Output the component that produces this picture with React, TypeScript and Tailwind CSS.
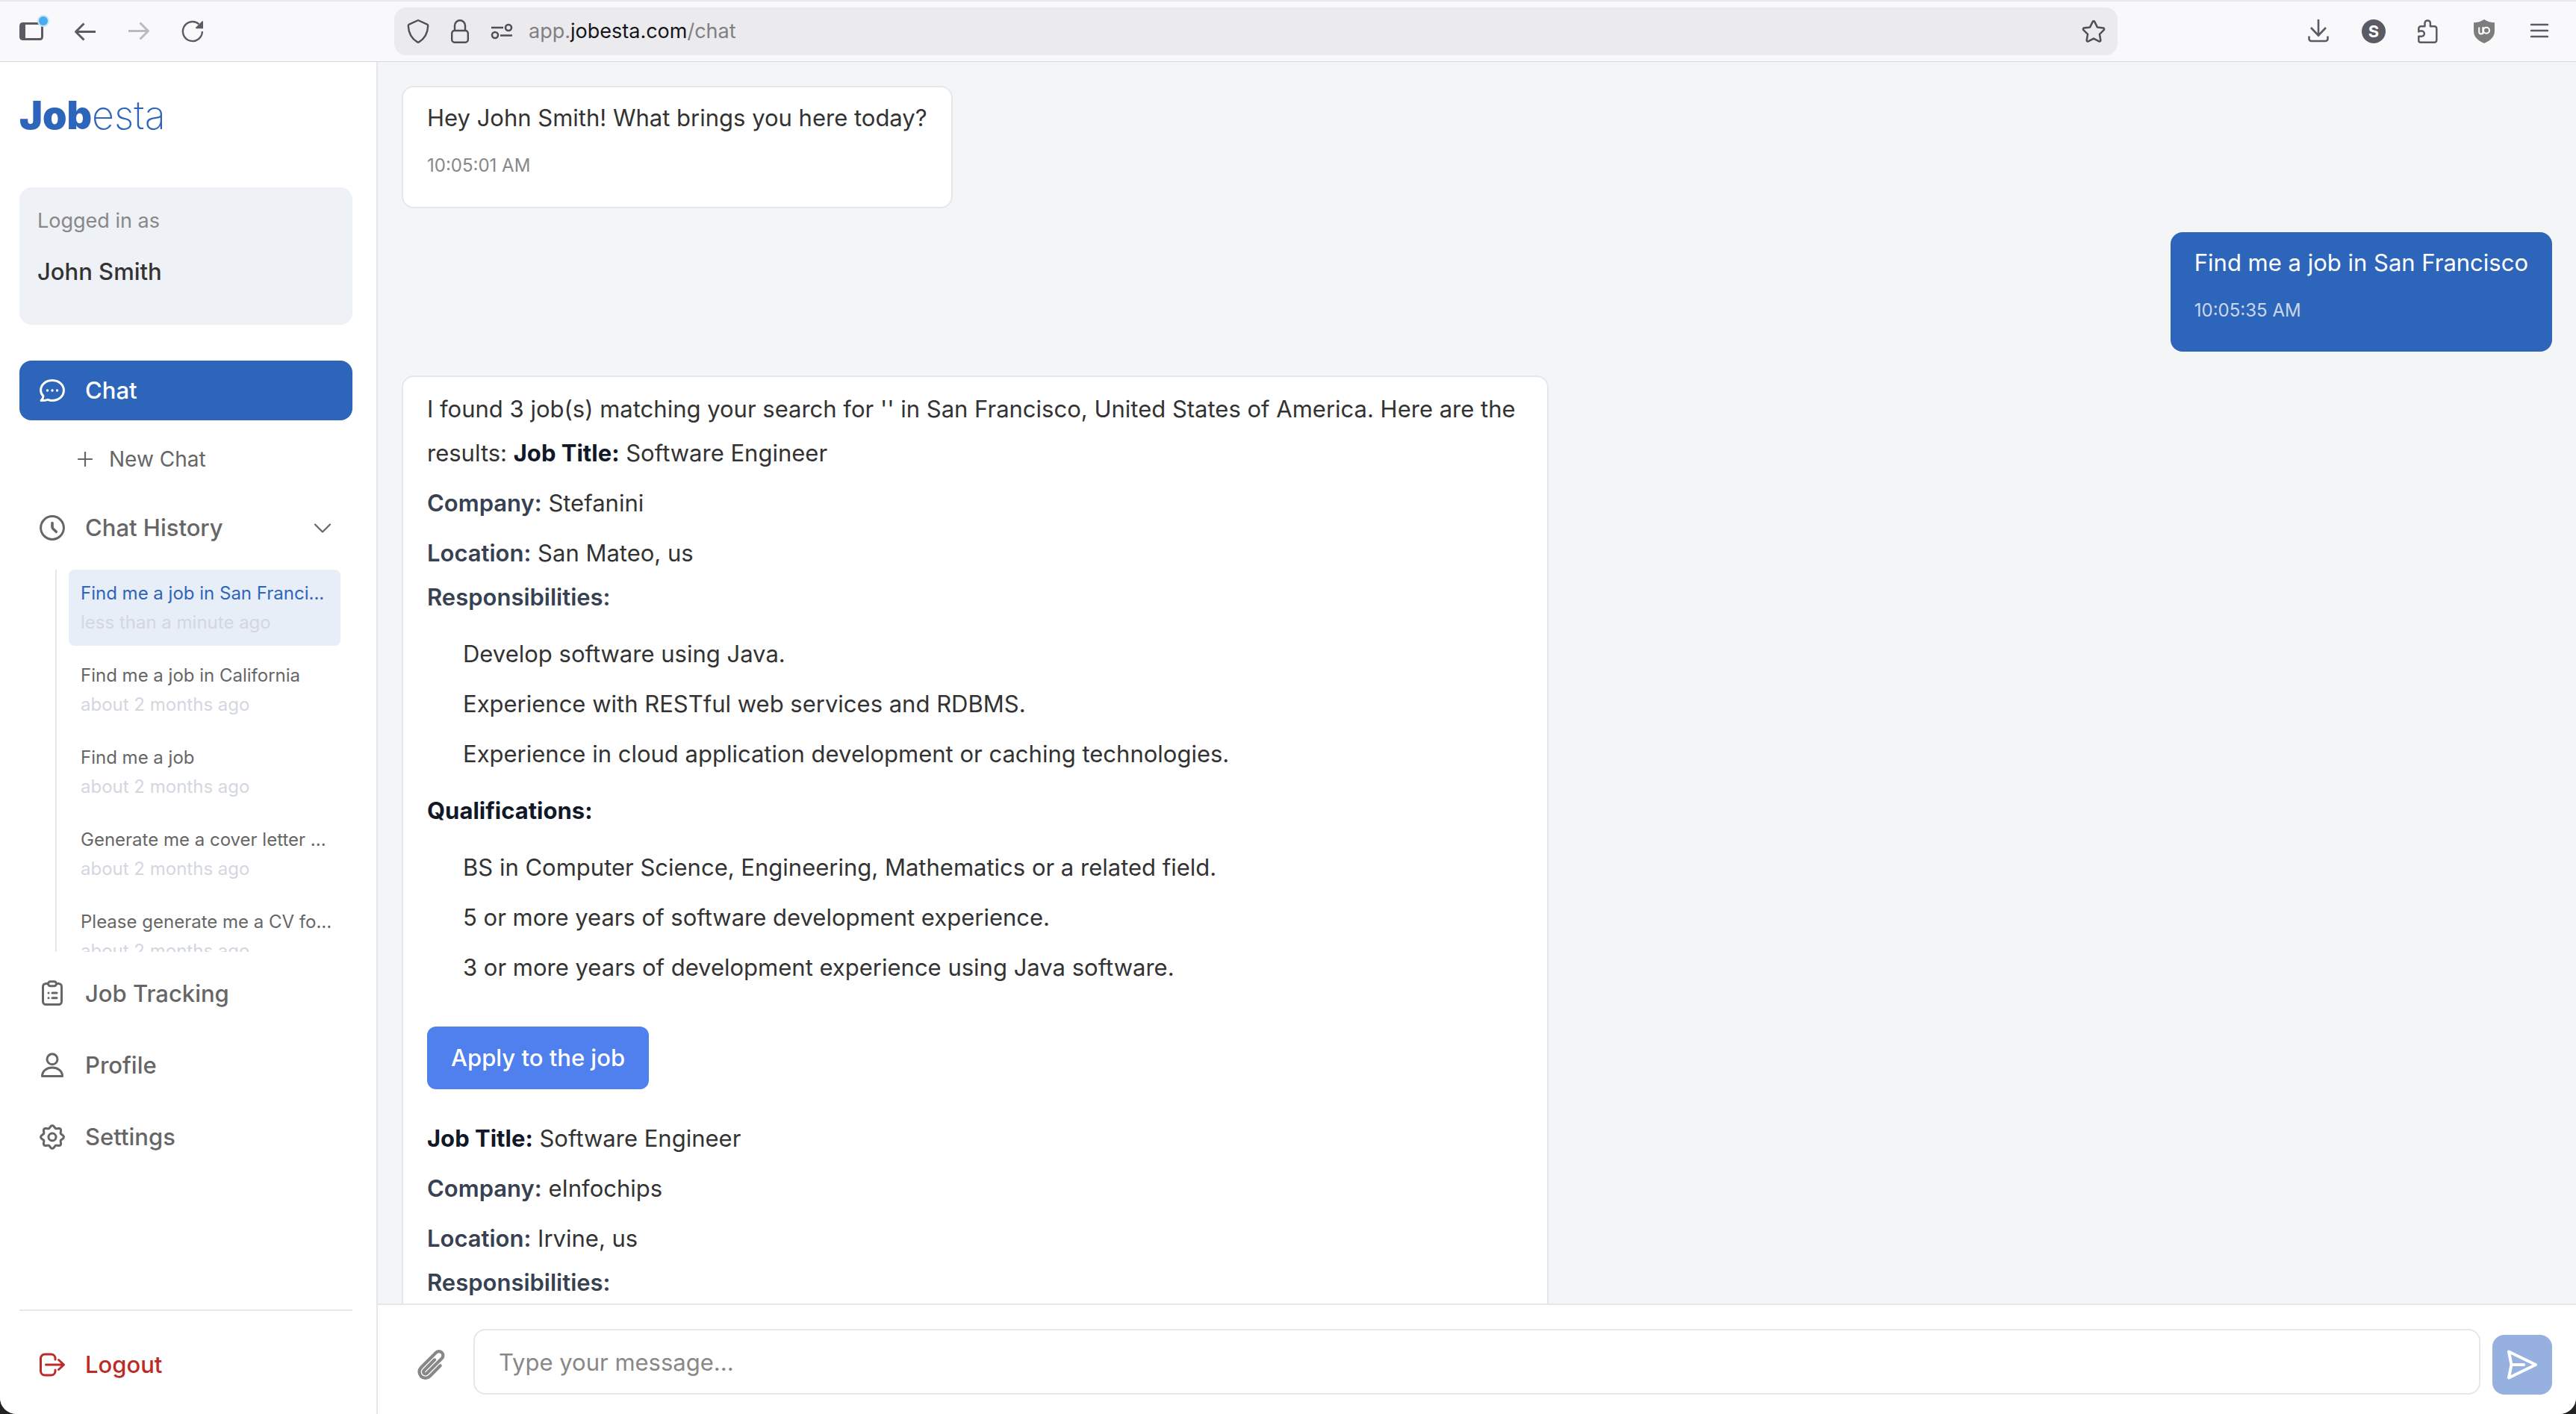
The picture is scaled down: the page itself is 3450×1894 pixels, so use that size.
import type { ReactNode } from "react";

type IconProps = { className?: string };

function SidebarToggleIcon() {
  return (
    <svg className="size-10 overflow-visible" viewBox="0 0 40 40" fill="none">
      <rect x="5.5" y="9.500" width="29" height="21" rx="3" stroke="#5b5b66" strokeWidth="3" />
      <rect x="5" y="9" width="7" height="22" rx="1" fill="#5b5b66" />
      <circle cx="36" cy="6" r="8" fill="#c4e8f7" />
      <circle cx="36" cy="6" r="6" fill="#4aabf0" />
    </svg>
  );
}

function BackIcon({ className }: IconProps) {
  return (
    <svg className={className} viewBox="0 0 32 32" fill="none" stroke="currentColor" strokeWidth="3" strokeLinejoin="round">
      <path d="M30 16.500H4M14.500 5.500L3.500 16.500L14.500 27.500" />
    </svg>
  );
}

function ReloadIcon() {
  return (
    <svg className="size-8 text-[#5b5b66]" viewBox="0 0 32 32" fill="none">
      <path d="M28.900 16A13 13 0 1 1 24.500 6.300" stroke="currentColor" strokeWidth="2.400" />
      <path d="M30 3v9.200h-9.200a.8.8 0 0 1-.6-1.400L28.600 2.400A.8.8 0 0 1 30 3z" fill="currentColor" />
    </svg>
  );
}

function ShieldIcon() {
  return (
    <svg className="size-8" viewBox="0 0 32 32" fill="none" stroke="#4f4f59" strokeWidth="2.400" strokeLinejoin="round">
      <path d="M15.200 1.500a2 2 0 0 1 1.600 0L28 6.600a2 2 0 0 1 1.200 2C28.800 19 23.500 26.500 17 30.400a2 2 0 0 1-2 0C8.500 26.500 3.200 19 2.800 8.600A2 2 0 0 1 4 6.600z" />
    </svg>
  );
}

function LockIcon() {
  return (
    <svg className="size-8" viewBox="0 0 32 32" fill="none" stroke="#4f4f59" strokeWidth="2.400">
      <rect x="5.200" y="15" width="21.600" height="15.800" rx="3.500" />
      <path d="M9 15V8.300a7 7 0 0 1 14 0V15" />
    </svg>
  );
}

function PermissionsIcon() {
  return (
    <svg className="size-8" viewBox="0 0 32 32" fill="none" stroke="#4f4f59" strokeWidth="2.600">
      <circle cx="25" cy="11" r="4" />
      <circle cx="7" cy="21" r="4" />
      <path d="M2 11h16M14 21.500h16" />
    </svg>
  );
}

function StarIcon() {
  return (
    <svg className="size-8" viewBox="0 0 32 32" fill="none" stroke="#4f4f59" strokeWidth="2.500" strokeLinejoin="round">
      <path d="M14.700 3.100a1.500 1.500 0 0 1 2.600 0l3.600 7.300 8 1.200a1.500 1.500 0 0 1 .8 2.500l-5.800 5.700 1.400 8a1.500 1.500 0 0 1-2.100 1.600L16 25.600l-7.200 3.800a1.500 1.500 0 0 1-2.100-1.600l1.400-8-5.800-5.700a1.500 1.500 0 0 1 .8-2.500l8-1.200z" />
    </svg>
  );
}

function DownloadIcon() {
  return (
    <svg className="size-8" viewBox="0 0 32 32" fill="none" stroke="#5b5b66" strokeWidth="2.600">
      <path d="M16 0v21M6 11l10 10.500L26 11M3.500 22.500V26a3 3 0 0 0 3 3h19a3 3 0 0 0 3-3v-3.500" />
    </svg>
  );
}

function PuzzleIcon() {
  return (
    <svg className="size-8" viewBox="0 0 32 32" fill="none" stroke="#5b5b66" strokeWidth="2.500" strokeLinejoin="round">
      <path d="M2.300 17.500V12a2.800 2.800 0 0 1 2.800-2.800h5.400V5.100a3.700 3.700 0 0 1 7.400 0v4.100h5.600a2.800 2.800 0 0 1 2.800 2.800v16a2.800 2.800 0 0 1-2.800 2.800H5.100A2.800 2.800 0 0 1 2.300 28v-5.300h4a3.600 3.600 0 0 0 0-7.200h-4" />
    </svg>
  );
}

function BlockerIcon() {
  return (
    <svg className="size-8" viewBox="0 0 32 32" fill="none">
      <path d="M16 0c4 2.800 9 4.300 14 4.300v11C30 24 24.500 28 16 32 7.500 28 2 24 2 15.300v-11C7 4.300 12 2.800 16 0z" fill="#7d7d7d" />
      <path d="M9.200 10.500v6.300a2.600 2.600 0 0 0 5.200 0v-6.300" stroke="#fff" strokeWidth="2" />
      <circle cx="19" cy="14.800" r="4" stroke="#fff" strokeWidth="2" />
      <path d="M14.600 10v9.800" stroke="#fff" strokeWidth="1.600" />
    </svg>
  );
}

function MenuIcon() {
  return (
    <svg className="size-8" viewBox="0 0 32 32" stroke="#5b5b66" strokeWidth="2.400" strokeLinecap="round">
      <path d="M5 7h22M5 15h22M5 23h22" />
    </svg>
  );
}

function NavIcon({ children }: { children: ReactNode }) {
  return (
    <svg className="size-9 shrink-0" viewBox="0 0 36 36" fill="none" stroke="currentColor" strokeWidth="3" strokeLinecap="round" strokeLinejoin="round">
      {children}
    </svg>
  );
}

function ChatIcon() {
  return (
    <NavIcon>
      <path d="M18 4.600c8.700 0 15.400 5.800 15.400 13.400S26.700 31.400 18 31.400c-2.200 0-4.200-.4-6-1.100-2.300.9-5 1.300-8.900 1.300 1.800-1.900 2.900-3.700 2.900-6C3.700 23.300 2.600 20.800 2.600 18 2.600 10.400 9.300 4.600 18 4.600z" />
      <path d="M11.500 18h.01M18 18h.01M24.500 18h.01" strokeWidth="3.400" />
    </NavIcon>
  );
}

function ClockIcon() {
  return (
    <NavIcon>
      <circle cx="18" cy="18" r="15.400" />
      <path d="M18 11.500v5.300c0 1 .3 1.700 1 2.400l4.300 4.100" strokeWidth="3.600" />
    </NavIcon>
  );
}

function ClipboardIcon() {
  return (
    <NavIcon>
      <path d="M12.500 4.500H9.500a4 4 0 0 0-4 4v20a4 4 0 0 0 4 4h17a4 4 0 0 0 4-4v-20a4 4 0 0 0-4-4h-3" />
      <rect x="12.500" y="1.800" width="11" height="6" rx="3" />
      <path d="M13 17h.01M13 23.800h.01M18 17h6M18 23.800h6" />
    </NavIcon>
  );
}

function ProfileIcon() {
  return (
    <NavIcon>
      <circle cx="18" cy="9.800" r="7" />
      <path d="M4.500 32.500c0-7 6-11.500 13.500-11.500s13.500 4.500 13.500 11.500z" />
    </NavIcon>
  );
}

const gearPath =
  Array.from({ length: 128 }, (_, i) => {
    const angle = (i / 128) * Math.PI * 2;
    const radius = 13.8 + 1.6 * Math.cos(8 * angle);
    const x = 18 + radius * Math.cos(angle);
    const y = 18 + radius * Math.sin(angle);
    return `${i === 0 ? "M" : "L"}${x.toFixed(2)} ${y.toFixed(2)}`;
  }).join("") + "Z";

function GearIcon() {
  return (
    <NavIcon>
      <path d={gearPath} />
      <circle cx="18" cy="18" r="5" />
    </NavIcon>
  );
}

function LogoutIcon() {
  return (
    <NavIcon>
      <path d="M22 11V9.500a5.500 5.500 0 0 0-5.500-5.500H8a5.500 5.500 0 0 0-5.500 5.500v17A5.500 5.500 0 0 0 8 32h8.500a5.500 5.500 0 0 0 5.500-5.500V25" />
      <path d="M9.500 18h23.500M26.500 11.500l7 6.500-7 6.500" />
    </NavIcon>
  );
}

const navClass = "flex h-20 w-full items-center gap-[26px] pl-[26px] pr-7 text-left text-[31px] leading-[50px] font-medium";

const history = [
  { title: "Find me a job in San Franci...", time: "less than a minute ago", active: true },
  { title: "Find me a job in California", time: "about 2 months ago" },
  { title: "Find me a job", time: "about 2 months ago" },
  { title: "Generate me a cover letter ...", time: "about 2 months ago" },
  { title: "Please generate me a CV fo...", time: "about 2 months ago" },
];

function BrowserBar() {
  const left = "flex h-16 w-[72px] items-center justify-center";
  const right = "flex h-16 w-[74px] items-center justify-center";
  return (
    <header className="flex shrink-0 items-center border-t-2 border-b border-t-[#e9e9eb] border-b-[#d9d9dc] bg-[#f9f9fb] py-2 pr-3 pl-[6px]">
      <button aria-label="Sidebar" className={left}><SidebarToggleIcon /></button>
      <button aria-label="Back" className={left}><BackIcon className="size-8 text-[#5b5b66]" /></button>
      <button aria-label="Forward" className={left}><BackIcon className="size-8 rotate-180 text-[#bbbbbe]" /></button>
      <button aria-label="Reload" className={left}><ReloadIcon /></button>
      <div className="mr-[232px] ml-[234px] flex h-16 flex-1 items-center rounded-2xl bg-[#ebebed] px-4">
        <div className="flex items-center gap-6">
          <ShieldIcon />
          <LockIcon />
          <PermissionsIcon />
        </div>
        <div className="ml-5 flex-1 text-[27px] leading-10 text-[#808083]">
          app.<span className="text-[#15141a]">jobesta.com</span>/chat
        </div>
        <button aria-label="Bookmark"><StarIcon /></button>
      </div>
      <button aria-label="Downloads" className={right}><DownloadIcon /></button>
      <button aria-label="Account" className={right}>
        <span className="flex size-8 items-center justify-center rounded-full bg-[#5b5b66] text-[22px] leading-8 font-bold text-white">S</span>
      </button>
      <button aria-label="Extensions" className={right}><PuzzleIcon /></button>
      <button aria-label="Content blocker" className={right}><BlockerIcon /></button>
      <button aria-label="Menu" className={right}><MenuIcon /></button>
    </header>
  );
}

function Sidebar() {
  return (
    <aside className="flex w-[506px] shrink-0 flex-col border-r-2 border-[#e2e8ec] bg-white pr-8 pb-[26px] pl-[26px] text-[#666]">
      <div className="flex h-[168px] items-center pb-6 text-[52px] leading-none text-[#2d65bb]">
        <span className="font-black">Job</span>
        <span className="font-extralight">esta</span>
      </div>
      <section className="rounded-2xl bg-[#eef1f6] px-6 pt-[25px] pb-[47px]">
        <p className="text-[27px] leading-10 text-[#888]">Logged in as</p>
        <p className="mt-6 text-[31px] leading-[48px] font-medium text-[#333]">John Smith</p>
      </section>
      <nav className="mt-12 flex flex-1 flex-col gap-4">
        <button className={`${navClass} rounded-2xl bg-[#2d65bb] text-white`}><ChatIcon />Chat</button>
        <button className="flex h-[72px] items-center gap-[22px] pl-[78px] text-[28px] leading-[42px]">
          <svg className="size-5" viewBox="0 0 20 20" stroke="currentColor" strokeWidth="2.200" strokeLinecap="round">
            <path d="M10 1v18M1 10h18" />
          </svg>
          New Chat
        </button>
        <button className={navClass}>
          <ClockIcon />
          <span className="flex-1">Chat History</span>
          <svg className="size-6" viewBox="0 0 24 24" fill="none" stroke="currentColor" strokeWidth="2.200" strokeLinecap="round" strokeLinejoin="round">
            <path d="M2 7.500l10 10 10-10" />
          </svg>
        </button>
        <ul className="mr-4 ml-12 flex h-[512px] flex-col gap-2 overflow-hidden border-l-2 border-[#e2e8ec] pl-4">
          {history.map((item) => (
            <li key={item.title} className="shrink-0">
              <button
                className={`block w-full rounded-lg py-3 pr-2 pl-4 text-left text-[24px] leading-[39px] ${
                  item.active ? "bg-[#e8eef8] text-[#2d65bb]" : ""
                }`}
              >
                <span className="block truncate">{item.title}</span>
                <span className="block text-[#d3d7df]">{item.time}</span>
              </button>
            </li>
          ))}
        </ul>
        <button className={navClass}><ClipboardIcon />Job Tracking</button>
        <button className={navClass}><ProfileIcon />Profile</button>
        <button className={navClass}><GearIcon />Settings</button>
      </nav>
      <div className="border-t-2 border-[#e2e8ec] pt-8">
        <button className={`${navClass} text-[#bd2b26]`}><LogoutIcon />Logout</button>
      </div>
    </aside>
  );
}

function Label({ children }: { children: ReactNode }) {
  return <strong className="font-semibold text-[#374151]">{children}</strong>;
}

function Title({ children }: { children: ReactNode }) {
  return <strong className="font-bold text-[#111827]">{children}</strong>;
}

function Bullets({ items }: { items: string[] }) {
  return (
    <ul className="my-[17px] space-y-2 pl-12">
      {items.map((item) => (
        <li key={item}>{item}</li>
      ))}
    </ul>
  );
}

function Conversation() {
  return (
    <div className="flex min-h-0 flex-1 flex-col items-start gap-8 overflow-hidden bg-[#f4f5f7] p-8 text-[31px] text-[#333]">
      <article className="shrink-0 rounded-2xl border-2 border-[#e2e8ec] bg-white px-8 pt-[13px] pb-[35px]">
        <p className="leading-[56px]">Hey John Smith! What brings you here today?</p>
        <time className="mt-4 block text-[24px] leading-10 text-[#888]">10:05:01 AM</time>
      </article>
      <article className="shrink-0 self-end rounded-2xl bg-[#2d65bb] px-8 pt-[13px] pb-[35px] text-white">
        <p className="leading-[56px]">Find me a job in San Francisco</p>
        <time className="mt-4 block text-[24px] leading-10 text-white/75">10:05:35 AM</time>
      </article>
      <article className="max-w-[1536px] shrink-0 rounded-2xl border-2 border-[#e2e8ec] bg-white px-8 pt-[13px] pb-[35px] leading-[59px]">
        <p>
          I found 3 job(s) matching your search for '' in San Francisco, United States of America. Here are the
          results: <Title>Job Title:</Title> Software Engineer
        </p>
        <p className="mt-2"><Label>Company:</Label> Stefanini</p>
        <p className="mt-2"><Label>Location:</Label> San Mateo, us</p>
        <p><Label>Responsibilities:</Label></p>
        <Bullets
          items={[
            "Develop software using Java.",
            "Experience with RESTful web services and RDBMS.",
            "Experience in cloud application development or caching technologies.",
          ]}
        />
        <p><Title>Qualifications:</Title></p>
        <Bullets
          items={[
            "BS in Computer Science, Engineering, Mathematics or a related field.",
            "5 or more years of software development experience.",
            "3 or more years of development experience using Java software.",
          ]}
        />
        <a href="#apply" className="mt-[50px] mb-9 block w-fit rounded-xl bg-[#4f80ee] px-8 py-3 leading-[60px] font-medium text-white">
          Apply to the job
        </a>
        <p><Title>Job Title:</Title> Software Engineer</p>
        <p className="mt-2"><Label>Company:</Label> eInfochips</p>
        <p className="mt-2"><Label>Location:</Label> Irvine, us</p>
        <p><Label>Responsibilities:</Label></p>
      </article>
    </div>
  );
}

function Composer() {
  return (
    <form className="flex shrink-0 items-end gap-4 border-t-2 border-[#e2e8ec] bg-white px-8 pt-8 pb-[26px]">
      <button type="button" aria-label="Attach file" className="flex size-20 items-center justify-center text-[#888]">
        <svg className="size-11" viewBox="0 0 24 24" fill="none" stroke="currentColor" strokeWidth="2.300" strokeLinecap="round" strokeLinejoin="round">
          <path d="m18.375 12.739-7.693 7.693a4.500 4.500 0 0 1-6.364-6.364l10.940-10.940A3 3 0 1 1 19.500 7.372L8.552 18.320m.009-.010-.010.010m5.699-9.941-7.810 7.810a1.500 1.500 0 0 0 2.112 2.130" />
        </svg>
      </button>
      <input
        type="text"
        aria-label="Message"
        placeholder="Type your message..."
        className="h-[88px] min-w-0 flex-1 rounded-2xl border-2 border-[#e2e8ec] bg-white px-8 text-[31px] text-[#333] placeholder:text-[#888]"
      />
      <button type="submit" aria-label="Send" className="flex size-20 items-center justify-center rounded-2xl bg-[#96b1df] text-white">
        <svg className="size-10" viewBox="0 0 40 40" fill="none" stroke="currentColor" strokeWidth="4" strokeLinecap="round" strokeLinejoin="round">
          <path d="M2 2.500L38 20 2 37.500 5.500 20zM6 20h16" />
        </svg>
      </button>
    </form>
  );
}

export default function App() {
  return (
    <div className="h-screen bg-[#222] font-['Inter',sans-serif]">
      <div className="flex h-full flex-col overflow-hidden rounded-b-[22px] bg-white">
        <BrowserBar />
        <div className="flex min-h-0 flex-1">
          <Sidebar />
          <main className="flex min-w-0 flex-1 flex-col">
            <Conversation />
            <Composer />
          </main>
        </div>
      </div>
    </div>
  );
}
